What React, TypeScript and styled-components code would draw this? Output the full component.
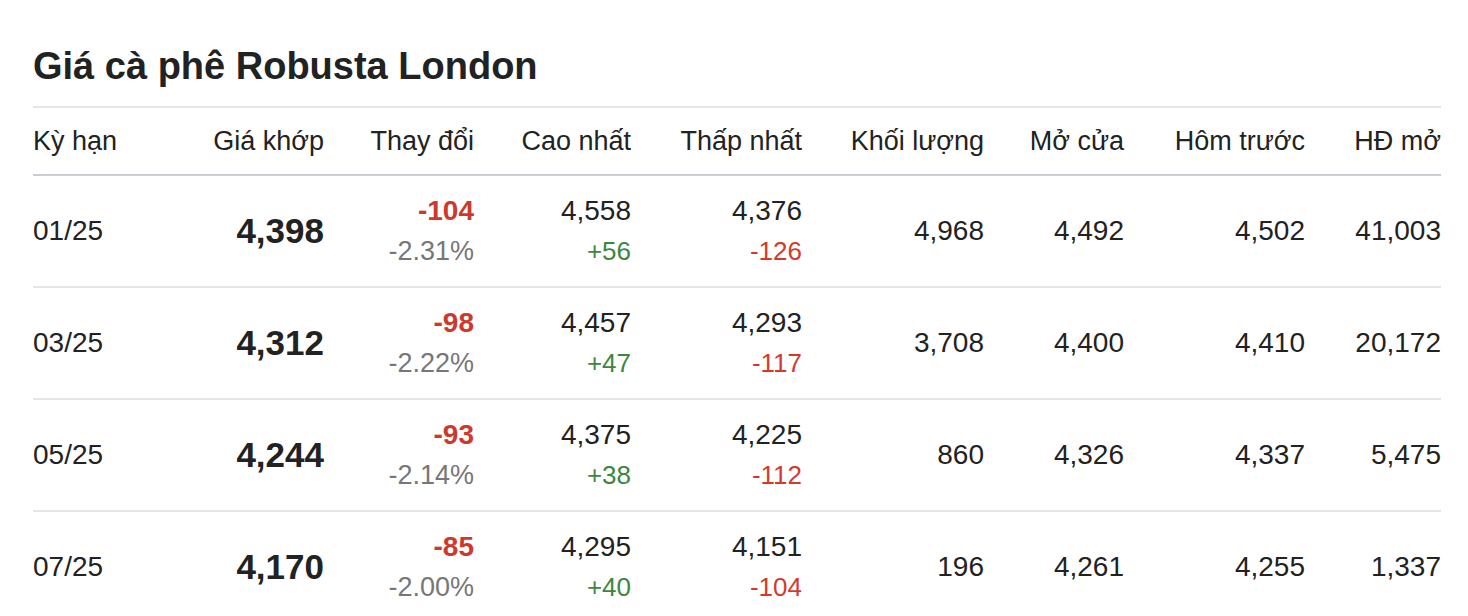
import React from 'react';
import styled, { createGlobalStyle } from 'styled-components';

const GlobalStyle = createGlobalStyle`
  html, body {
    margin: 0;
    padding: 0;
    background: #ffffff;
  }
  body {
    font-family: "Liberation Sans", Arial, Helvetica, sans-serif;
    color: #222222;
  }
`;

const Wrapper = styled.div`
  padding: 43px 27px 0 33px;
`;

const Title = styled.h2`
  margin: 0 0 17px;
  font-size: 38px;
  line-height: 46px;
  font-weight: 700;
  color: #222222;
`;

const Table = styled.table`
  width: 1408px;
  border-collapse: collapse;
  table-layout: fixed;
  border-top: 2px solid #e3e7ec;
`;

const HeadCell = styled.th<{ $left?: boolean }>`
  height: 66px;
  padding: 0;
  font-size: 27px;
  font-weight: 400;
  color: #222222;
  text-align: ${(p) => (p.$left ? 'left' : 'right')};
  vertical-align: middle;
  border-bottom: 2px solid #c9cdd4;
  white-space: nowrap;
`;

const Row = styled.tr`
  border-bottom: 2px solid #e3e7ec;
`;

const Cell = styled.td<{ $left?: boolean }>`
  height: 110px;
  padding: 0;
  font-size: 28px;
  text-align: ${(p) => (p.$left ? 'left' : 'right')};
  vertical-align: middle;
  color: #222222;
  white-space: nowrap;
`;

const Price = styled.span`
  font-size: 35px;
  font-weight: 700;
`;

const Stack = styled.div`
  display: flex;
  flex-direction: column;
  align-items: flex-end;
  line-height: 41px;
`;

const Change = styled.span`
  font-size: 28px;
  font-weight: 700;
  color: #cc3a2c;
`;

const Sub = styled.span<{ $tone: 'up' | 'down' | 'muted' }>`
  font-size: ${(p) => (p.$tone === 'muted' ? '27px' : '26px')};
  color: ${(p) =>
    p.$tone === 'up' ? '#3b873e' : p.$tone === 'down' ? '#d33a2c' : '#777777'};
`;

const widths = [150, 141, 150, 157, 171, 182, 140, 181, 136];

const headers = [
  'Kỳ hạn',
  'Giá khớp',
  'Thay đổi',
  'Cao nhất',
  'Thấp nhất',
  'Khối lượng',
  'Mở cửa',
  'Hôm trước',
  'HĐ mở',
];

interface IRow {
  term: string;
  price: string;
  change: string;
  pct: string;
  high: string;
  highDiff: string;
  low: string;
  lowDiff: string;
  volume: string;
  open: string;
  prev: string;
  oi: string;
}

const rows: IRow[] = [
  { term: '01/25', price: '4,398', change: '-104', pct: '-2.31%', high: '4,558', highDiff: '+56', low: '4,376', lowDiff: '-126', volume: '4,968', open: '4,492', prev: '4,502', oi: '41,003' },
  { term: '03/25', price: '4,312', change: '-98', pct: '-2.22%', high: '4,457', highDiff: '+47', low: '4,293', lowDiff: '-117', volume: '3,708', open: '4,400', prev: '4,410', oi: '20,172' },
  { term: '05/25', price: '4,244', change: '-93', pct: '-2.14%', high: '4,375', highDiff: '+38', low: '4,225', lowDiff: '-112', volume: '860', open: '4,326', prev: '4,337', oi: '5,475' },
  { term: '07/25', price: '4,170', change: '-85', pct: '-2.00%', high: '4,295', highDiff: '+40', low: '4,151', lowDiff: '-104', volume: '196', open: '4,261', prev: '4,255', oi: '1,337' },
];

const App: React.FC = () => (
  <Wrapper>
    <GlobalStyle />
    <Title>Giá cà phê Robusta London</Title>
    <Table>
      <colgroup>
        {widths.map((w, i) => (
          <col key={i} style={{ width: w }} />
        ))}
      </colgroup>
      <thead>
        <tr>
          {headers.map((h, i) => (
            <HeadCell key={h} $left={i === 0}>
              {h}
            </HeadCell>
          ))}
        </tr>
      </thead>
      <tbody>
        {rows.map((r) => (
          <Row key={r.term}>
            <Cell $left>{r.term}</Cell>
            <Cell>
              <Price>{r.price}</Price>
            </Cell>
            <Cell>
              <Stack>
                <Change>{r.change}</Change>
                <Sub $tone="muted">{r.pct}</Sub>
              </Stack>
            </Cell>
            <Cell>
              <Stack>
                <span>{r.high}</span>
                <Sub $tone="up">{r.highDiff}</Sub>
              </Stack>
            </Cell>
            <Cell>
              <Stack>
                <span>{r.low}</span>
                <Sub $tone="down">{r.lowDiff}</Sub>
              </Stack>
            </Cell>
            <Cell>{r.volume}</Cell>
            <Cell>{r.open}</Cell>
            <Cell>{r.prev}</Cell>
            <Cell>{r.oi}</Cell>
          </Row>
        ))}
      </tbody>
    </Table>
  </Wrapper>
);

export default App;
